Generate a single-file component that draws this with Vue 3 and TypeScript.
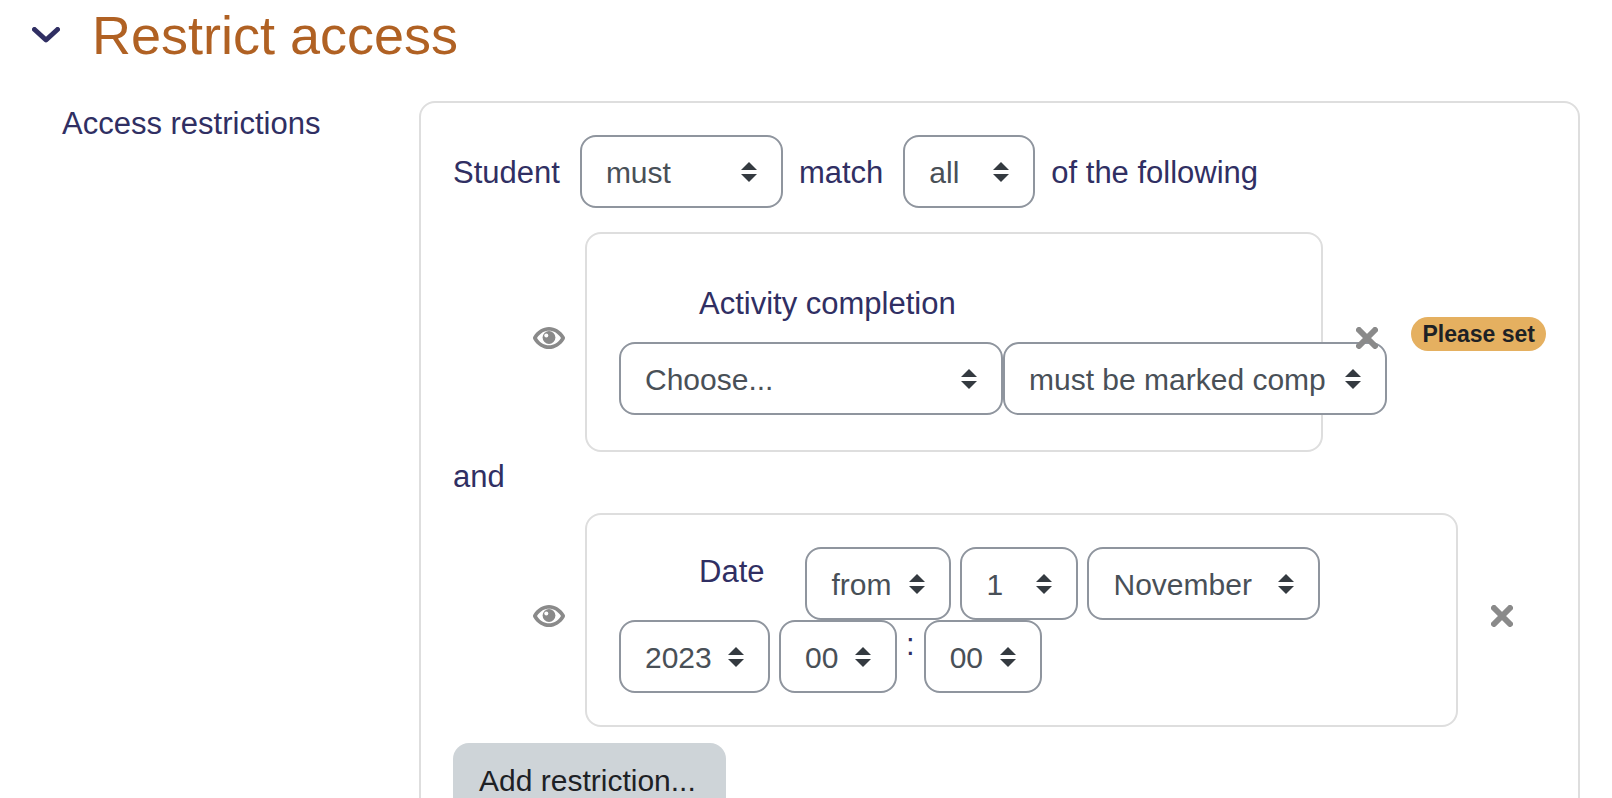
<script setup lang="ts">
import { ref } from 'vue'

const open = ref(true)
const mode = ref('must')
const match = ref('all')
const activity = ref('Choose...')
const completion = ref('must be marked complete')
const direction = ref('from')
const day = ref('1')
const month = ref('November')
const year = ref('2023')
const hour = ref('00')
const minute = ref('00')
</script>

<template>
  <main class="page">
    <header class="section-head">
      <button class="icon-button" type="button" aria-label="Toggle section" :aria-expanded="open" @click="open = !open">
        <svg class="chevron" viewBox="0 0 28 16" aria-hidden="true"><path d="M2.500 2.500 14 13 25.500 2.500" /></svg>
      </button>
      <h1>Restrict access</h1>
    </header>

    <div v-show="open" class="form-row">
      <div id="restrictions-label" class="form-label">Access restrictions</div>
      <section class="panel outer" aria-labelledby="restrictions-label">
        <div class="match-row">
          <label for="mode">Student</label>
          <select id="mode" v-model="mode" class="w-mode"><option>must</option><option>must not</option></select>
          <label for="match">match</label>
          <select id="match" v-model="match" class="w-match"><option>all</option><option>any</option></select>
          <span>of the following</span>
        </div>

        <div class="item">
          <button class="icon-button eye-button" type="button" aria-label="Displayed if student doesn't meet this condition">
            <svg class="eye" viewBox="0 0 32 22" aria-hidden="true">
              <path class="lid" d="M.3 9.800C4 3.500 10 0 16 0s12 3.500 15.700 9.800q.6 1.200 0 2.400C28 18.500 22 22 16 22S4 18.500.3 12.200q-.6-1.200 0-2.400zM4 11c3 4.800 7.200 7.300 12 7.300S25 15.800 28 11C25 6.200 20.800 3.700 16 3.700S7 6.200 4 11z" />
              <circle class="iris" cx="16" cy="10.500" r="6.400" />
              <circle class="glint" cx="13.300" cy="8.500" r="2" />
            </svg>
          </button>
          <div class="panel card activity">
            <label class="card-title" for="activity">Activity completion</label>
            <div class="pair">
              <select id="activity" v-model="activity" class="w-wide"><option>Choose...</option></select>
              <select v-model="completion" class="w-wide" aria-label="Required completion status"><option>must be marked complete</option></select>
            </div>
          </div>
          <button class="icon-button delete-button" type="button" aria-label="Delete activity completion">
            <svg class="cross" viewBox="0 0 22 22" aria-hidden="true"><path d="M3 3 19 19M19 3 3 19" /></svg>
          </button>
          <span class="badge">Please set</span>
        </div>

        <div class="joiner">and</div>

        <div class="item">
          <button class="icon-button eye-button" type="button" aria-label="Displayed if student doesn't meet this condition">
            <svg class="eye" viewBox="0 0 32 22" aria-hidden="true">
              <path class="lid" d="M.3 9.800C4 3.500 10 0 16 0s12 3.500 15.700 9.800q.6 1.200 0 2.400C28 18.500 22 22 16 22S4 18.500.3 12.200q-.6-1.200 0-2.400zM4 11c3 4.800 7.200 7.300 12 7.300S25 15.800 28 11C25 6.200 20.800 3.700 16 3.700S7 6.200 4 11z" />
              <circle class="iris" cx="16" cy="10.500" r="6.400" />
              <circle class="glint" cx="13.300" cy="8.500" r="2" />
            </svg>
          </button>
          <div class="panel card">
            <div class="date-row">
              <label class="card-title date-title" for="direction">Date</label>
              <select id="direction" v-model="direction" class="w-direction"><option>from</option><option>until</option></select>
              <select v-model="day" class="w-small" aria-label="Day"><option>1</option></select>
              <select v-model="month" class="w-month" aria-label="Month"><option>November</option></select>
            </div>
            <div class="date-row">
              <select v-model="year" class="w-year" aria-label="Year"><option>2023</option></select>
              <select v-model="hour" class="w-small" aria-label="Hour"><option>00</option></select>
              <span>:</span>
              <select v-model="minute" class="w-small" aria-label="Minute"><option>00</option></select>
            </div>
          </div>
          <button class="icon-button delete-button" type="button" aria-label="Delete date">
            <svg class="cross" viewBox="0 0 22 22" aria-hidden="true"><path d="M3 3 19 19M19 3 3 19" /></svg>
          </button>
        </div>

        <button class="add" type="button">Add restriction...</button>
      </section>
    </div>
  </main>
</template>

<style>
html,
body {
  background: #fff;
}

body {
  margin: 0;
  overflow: hidden;
}
</style>

<style scoped>
.page {
  padding: 0 32px;
  color: #302f63;
  font-family: "Liberation Sans", Arial, sans-serif;
  font-size: 31px;
  line-height: 45px;
}

.page *,
.page {
  box-sizing: border-box;
}

.section-head {
  display: flex;
  align-items: center;
  gap: 32px;
  padding: 3px 0 34px;
}

h1 {
  margin: 0;
  color: #b06123;
  font-size: 54px;
  font-weight: 400;
  line-height: 64px;
}

.icon-button {
  display: block;
  flex: none;
  padding: 0;
  border: 0;
  background: none;
  cursor: pointer;
}

.icon-button svg {
  display: block;
}

.chevron {
  width: 28px;
  height: 16px;
  fill: none;
  stroke: #302f63;
  stroke-width: 5;
  stroke-linecap: round;
  stroke-linejoin: round;
}

.form-row {
  display: grid;
  grid-template-columns: minmax(0, 1fr) minmax(0, 3fr);
}

.form-label {
  padding-left: 30px;
}

.panel {
  padding: 32px;
  border: 2px solid #dedede;
  border-radius: 16px;
}

.match-row {
  display: flex;
  align-items: center;
  margin-bottom: 24px;
}

.match-row label,
.match-row span,
.date-row span,
.date-title {
  padding-top: 2px;
}

.match-row select {
  margin: 0 16px 0 20px;
}

select {
  flex: none;
  height: 73px;
  padding: 2px 60px 0 24px;
  border: 2px solid #8f959e;
  border-radius: 16px;
  appearance: none;
  background: #fff url("data:image/svg+xml,%3Csvg xmlns='http://www.w3.org/2000/svg' viewBox='0 0 4 5'%3E%3Cpath fill='%23343a40' d='M2 0L0 2h4zm0 5L0 3h4z'/%3E%3C/svg%3E") no-repeat right 24px center / 16px 20px;
  color: #495057;
  font-family: inherit;
  font-size: 30px;
}

.w-mode {
  width: 203px;
}

.w-match {
  width: 132px;
}

.w-wide {
  width: 384px;
}

.w-direction {
  width: 146px;
  padding-right: 48px;
}

.w-small {
  width: 118px;
  padding-right: 48px;
}

.w-month {
  width: 233px;
}

.w-year {
  width: 151px;
  padding-right: 48px;
}

.item {
  display: flex;
  align-items: center;
}

.eye-button {
  margin: 0 20px 8px 80px;
}

.eye {
  width: 32px;
  height: 22px;
}

.lid {
  fill: #8a8a8a;
  fill-rule: evenodd;
}

.iris {
  fill: #8a8a8a;
}

.glint {
  fill: #fff;
}

.card {
  flex: 1;
  min-width: 0;
}

.activity {
  padding-top: 47px;
  padding-bottom: 35px;
}

.card-title {
  display: block;
  padding-left: 80px;
}

.pair {
  display: flex;
  margin-top: 16px;
}

.delete-button {
  margin: 0 33px 8px 33px;
}

.cross {
  width: 22px;
  height: 22px;
  fill: none;
  stroke: #8a8a8a;
  stroke-width: 6;
  stroke-linecap: round;
}

.badge {
  flex: none;
  margin-bottom: 16px;
  padding: 0 11px;
  border-radius: 17px;
  background: #e5b060;
  color: #1d2125;
  font-size: 23px;
  font-weight: 700;
  line-height: 34px;
}

.joiner {
  padding: 2px 0 14px;
}

.date-row {
  display: flex;
  align-items: flex-start;
  gap: 9px;
}

.date-title {
  margin-right: 32px;
}

.add {
  display: block;
  height: 73px;
  margin-top: 16px;
  padding: 2px 30px 0 26px;
  border: 0;
  border-radius: 16px;
  background: #ced4d8;
  color: #1d2125;
  font-family: inherit;
  font-size: 30px;
  cursor: pointer;
}
</style>
